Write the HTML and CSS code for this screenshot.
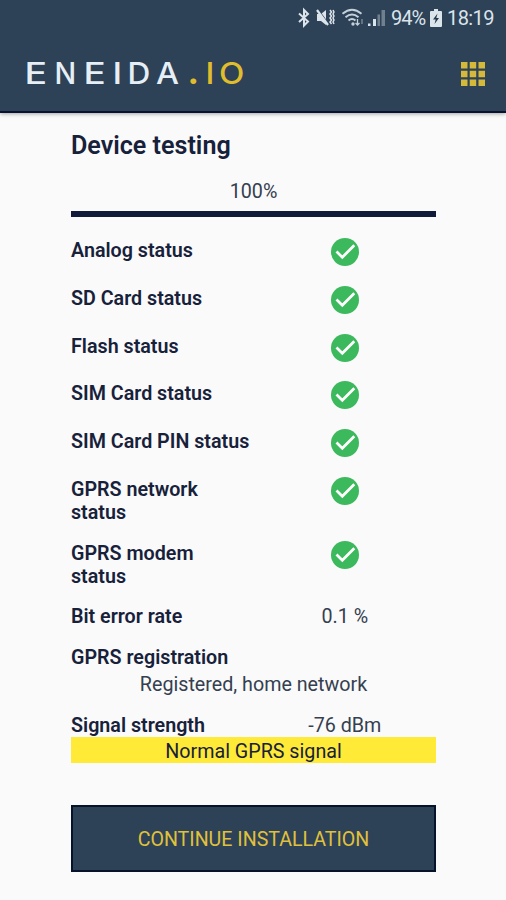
FILE: index.html
```html
<!DOCTYPE html>
<html lang="en">
<head>
<meta charset="utf-8">
<title>Device testing</title>
<link rel="stylesheet" href="styles.css">
</head>
<body>
<svg width="0" height="0" class="defs">
  <symbol id="check" viewBox="0 0 28 28">
    <circle cx="14" cy="14" r="14" fill="#3cb95d"/>
    <path d="M5.500 13.500 11.300 19.300 23.300 7.300" fill="none" stroke="#fff" stroke-width="2.700"/>
  </symbol>
</svg>
<header class="header">
  <div class="statusbar">
    <svg class="status-icons" width="90" height="24" viewBox="0 0 90 24">
      <path d="M2 8.500 11 16.500 7 20.500V5L11 9 2 17" fill="none" stroke="#dce4eb" stroke-width="2"/>
      <g fill="none" stroke="#dce4eb">
        <path d="M20 9h4l5-4v15l-5-4h-4z" fill="#dce4eb" stroke="none"/>
        <path d="m21.500 5 11 15" stroke="#2d4157" stroke-width="1.200"/>
        <path d="m20 5 11 15" stroke-width="2.200"/>
        <path d="m33 5 1.500 2-1.500 2 1.500 2-1.500 2 1.500 2-1.500 2 1.500 2M36 5l1 2-1 2 1 2-1 2 1 2-1 2 1 2" stroke-width="1.500"/>
      </g>
      <g fill="none" stroke="#c5d0d9" stroke-width="2">
        <path d="M45.500 8.700q9.500-8 19 0M48.500 12.200q6.500-5.500 13 0M51.500 15.500q3.500-3 7 0"/>
        <circle cx="56" cy="19" r="1.700" fill="#c5d0d9" stroke="none"/>
        <path d="M60.500 14v6m-2-2 2 2 2-2" stroke-width="1.300"/>
        <path d="M65 19v-5" stroke="#8795a2" stroke-width="1.200"/>
      </g>
      <path d="M71 18.500h2.500V21H71zM76 14h3v7h-3z" fill="#dce4eb"/>
      <path d="M80.500 9.500H83V21h-2.500zM84.500 5h3.500v16h-3.500z" fill="#71808e"/>
    </svg>
    <span class="percent">94%</span>
    <svg class="battery" width="12" height="18" viewBox="0 0 12 18">
      <path d="M4 0h4v2h3q1 0 1 1v14q0 1-1 1H1q-1 0-1-1V3q0-1 1-1h3z" fill="#dce4eb"/>
      <path d="M7.500 4.500 3 10.500h2.700L4.500 15 9 9H6.300z" fill="#26384b"/>
    </svg>
    <span class="clock">18:19</span>
  </div>
  <div class="appbar">
    <svg class="logo" width="224" height="28" viewBox="0 0 224 28">
      <g class="logo-name">
        <text transform="translate(.5 24) scale(1.270 1)">E</text>
        <text transform="translate(30.500 24) scale(.970 1)">N</text>
        <text transform="translate(59.500 24) scale(1.250 1)">E</text>
        <text transform="translate(88.500 24) scale(1.200 1)">I</text>
        <text transform="translate(103.500 24) scale(1.070 1)">D</text>
        <text transform="translate(132 24) scale(1.100 1)">A</text>
      </g>
      <g class="logo-io">
        <text transform="translate(163 24) scale(1.400 1.300)">.</text>
        <text transform="translate(181.500 24) scale(1.100 1)">I</text>
        <text transform="translate(195 24) scale(1.120 1)">O</text>
      </g>
    </svg>
    <svg class="menu" width="24" height="24" viewBox="0 0 24 24" fill="#d5b93b">
      <path d="M0 0h6.500v6.500H0zM8.700 0h6.500v6.500H8.700zM17.500 0H24v6.500h-6.500zM0 8.700h6.500v6.500H0zM8.700 8.700h6.500v6.500H8.700zM17.500 8.700H24v6.500h-6.500zM0 17.500h6.500V24H0zM8.700 17.500h6.500V24H8.700zM17.500 17.500H24V24h-6.500z"/>
    </svg>
  </div>
</header>
<main class="content">
  <h1>Device testing</h1>
  <div class="progress-label">100%</div>
  <div class="progress"></div>
  <div class="rows">
    <div class="row"><span class="label">Analog status</span><svg class="check"><use href="#check"/></svg></div>
    <div class="row"><span class="label">SD Card status</span><svg class="check"><use href="#check"/></svg></div>
    <div class="row"><span class="label">Flash status</span><svg class="check"><use href="#check"/></svg></div>
    <div class="row"><span class="label">SIM Card status</span><svg class="check"><use href="#check"/></svg></div>
    <div class="row"><span class="label">SIM Card PIN status</span><svg class="check"><use href="#check"/></svg></div>
    <div class="row tall"><span class="label">GPRS network status</span><svg class="check"><use href="#check"/></svg></div>
    <div class="row tall"><span class="label">GPRS modem status</span><svg class="check"><use href="#check"/></svg></div>
    <div class="row reading"><span class="label">Bit error rate</span><span class="value">0.1 %</span></div>
  </div>
  <div class="label">GPRS registration</div>
  <div class="registration">Registered, home network</div>
  <div class="row signal"><span class="label">Signal strength</span><span class="value">-76 dBm</span></div>
  <div class="banner">Normal GPRS signal</div>
  <button class="continue">CONTINUE INSTALLATION</button>
</main>
</body>
</html>
```
FILE: styles.css
```css
* { box-sizing: border-box; }
body {
  margin: 0;
  height: 900px;
  overflow: hidden;
  background: #fafafa;
  color: #17213a;
  font: 400 19.7px/23px Roboto, sans-serif;
}
.defs { display: block; }
.header {
  height: 113px;
  background: #2d4157;
  border-bottom: 2px solid #0b1130;
  box-shadow: 0 1px 4px rgba(0, 0, 0, .35);
}
.statusbar {
  display: flex;
  align-items: center;
  height: 36px;
  padding: 0 12px 0 297px;
  color: #dce4eb;
  font-size: 20px;
}
.status-icons { flex: none; margin-top: -2px; }
.percent { margin-left: 4px; width: 35px; white-space: nowrap; letter-spacing: -1px; }
.battery { flex: none; margin: -1px 0 0 4px; }
.clock { margin-left: 5px; letter-spacing: -.6px; }
.appbar {
  display: flex;
  justify-content: space-between;
  align-items: center;
  height: 75px;
  padding: 0 21px 0 24px;
}
.logo { overflow: visible; }
.logo text { font-family: Inter, sans-serif; font-size: 29.5px; font-weight: 500; }
.logo-name { fill: #e6eef6; }
.logo-io { fill: #e0bd2c; }
.content { width: 365px; margin: 0 0 0 71px; padding-top: 18px; }
h1 { margin: 0; font-size: 25.1px; line-height: 30px; font-weight: 600; }
.progress-label { padding-top: 19px; text-align: center; }
.progress { height: 6px; margin-top: 8px; background: #101a3a; }
.rows { padding-top: 21px; }
.row { display: grid; grid-template-columns: 1fr 1fr; height: 47.8px; }
.row .label { padding-top: 1px; }
.row.tall { height: 63.8px; }
.row.tall .label { width: 150px; }
.row.reading { height: 41px; }
.row.reading .label { padding-top: 0; }
.label { font-weight: 600; }
.check { width: 28px; height: 28px; justify-self: center; }
.value { text-align: center; }
.registration, .value, .progress-label { color: #344050; }
.registration { margin-top: 4px; text-align: center; }
.row.signal { height: 24px; margin-top: 17px; }
.row.signal .value { padding-top: 1px; }
.banner { height: 26px; line-height: 29px; background: #ffea38; text-align: center; }
.continue {
  display: block;
  width: 100%;
  height: 67px;
  margin-top: 42px;
  padding: 2px 0 0;
  border: 2px solid #07132a;
  background: #2d4157;
  color: #e0c13b;
  font: 400 19.6px/23px Roboto, sans-serif;
}
```
